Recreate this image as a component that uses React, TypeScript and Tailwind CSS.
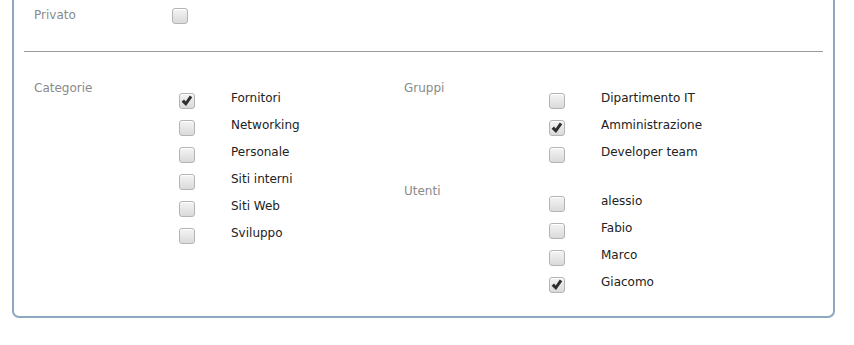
import React from 'react'

type Item = { label: string; checked?: boolean }

function Checkbox({ checked = false }: { checked?: boolean }) {
  return (
    <span className="flex h-4 w-4 shrink-0 items-center justify-center rounded-[3px] border border-[#b4b4b4] bg-gradient-to-b from-[#f4f4f4] to-[#dadada] shadow-[inset_0_1px_0_#fff]">
      {checked && (
        <svg viewBox="0 0 16 16" className="h-[14px] w-[14px]">
          <path d="M1.8 8.8 L4.6 6.2 L6.5 8.6 L11.2 1.8 L14 3.8 L6.9 13.6 Z" fill="#2e2e2e" />
        </svg>
      )}
    </span>
  )
}

function Group({ title, items, className = '' }: { title: string; items: Item[]; className?: string }) {
  return (
    <div className={`flex ${className}`}>
      <div className="w-[145px] shrink-0 text-[#8a8a8a]">{title}</div>
      <div className="flex flex-col pt-[10px]">
        {items.map((it) => (
          <div key={it.label} className="flex h-[27px] items-start gap-[36px]">
            <span className="mt-[3px]">
              <Checkbox checked={it.checked} />
            </span>
            <span className="text-[#222]">{it.label}</span>
          </div>
        ))}
      </div>
    </div>
  )
}

export default function App() {
  const categorie: Item[] = [
    { label: 'Fornitori', checked: true },
    { label: 'Networking' },
    { label: 'Personale' },
    { label: 'Siti interni' },
    { label: 'Siti Web' },
    { label: 'Sviluppo' },
  ]
  const gruppi: Item[] = [
    { label: 'Dipartimento IT' },
    { label: 'Amministrazione', checked: true },
    { label: 'Developer team' },
  ]
  const utenti: Item[] = [
    { label: 'alessio' },
    { label: 'Fabio' },
    { label: 'Marco' },
    { label: 'Giacomo', checked: true },
  ]

  return (
    <div className="h-[345px] w-[854px] overflow-hidden bg-white font-['DejaVu_Sans',sans-serif] text-[12px] leading-4">
      <div className="ml-3 h-[318px] w-[823px] rounded-b-[7px] border-2 border-t-0 border-[#8fa8c2] px-[10px] pt-2">
        {/* Privato */}
        <div className="flex h-4 items-center pl-[10px]">
          <div className="w-[138px] -mt-[2px] text-[#8a8a8a]">Privato</div>
          <Checkbox />
        </div>

        <div className="mt-[27px] h-px bg-[#9a9a9a]" />

        {/* Sections */}
        <div className="mt-[28px] flex pl-[10px]">
          <Group title="Categorie" items={categorie} className="w-[370px]" />
          <div className="flex flex-col">
            <Group title="Gruppi" items={gruppi} />
            <Group title="Utenti" items={utenti} className="mt-[12px]" />
          </div>
        </div>
      </div>
    </div>
  )
}
